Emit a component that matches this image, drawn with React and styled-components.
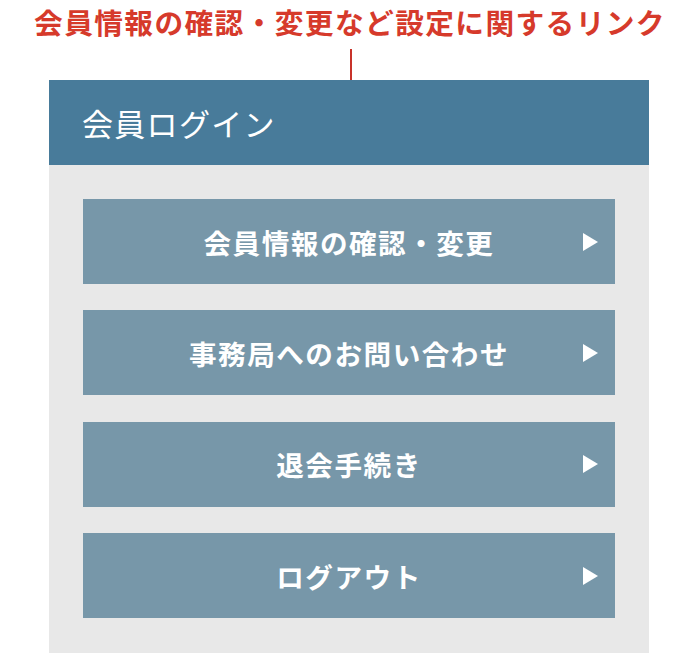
import React from "react";
import styled, { createGlobalStyle } from "styled-components";

const Global = createGlobalStyle`
  html, body { margin: 0; padding: 0; background: #ffffff; }
  body { font-family: "Noto Sans CJK JP", "Noto Sans", sans-serif; }
`;

const Page = styled.div`
  width: 700px;
  display: flex;
  flex-direction: column;
  align-items: center;
`;

const Caption = styled.div`
  margin-top: 3px;
  height: 38px;
  line-height: 38px;
  font-size: 28.7px;
  font-weight: 700;
  letter-spacing: 1.4px;
  color: #d63a2b;
  white-space: nowrap;
`;

const Connector = styled.div`
  width: 2px;
  height: 31px;
  margin-top: 8px;
  margin-left: 2px;
  background: #c8332a;
`;

const Panel = styled.section`
  width: 600px;
  margin-left: -2px;
  background: #e8e8e8;
`;

const PanelHeader = styled.h2`
  margin: 0;
  height: 85px;
  display: flex;
  align-items: center;
  padding-left: 33px;
  background: #487b9a;
  color: #ffffff;
  font-size: 31px;
  font-weight: 400;
  letter-spacing: 1.3px;
`;

const LinkList = styled.div`
  padding: 34px 34px 35px;
  display: flex;
  flex-direction: column;
  gap: 26.4px;
`;

const LinkButton = styled.a`
  position: relative;
  height: 85px;
  display: flex;
  align-items: center;
  justify-content: center;
  background: #7797a9;
  color: #ffffff;
  font-size: 27.6px;
  font-weight: 700;
  letter-spacing: 1.5px;
  text-decoration: none;
`;

const Arrow = styled.span`
  position: absolute;
  right: 17px;
  top: 50%;
  transform: translateY(-50%);
  width: 0;
  height: 0;
  border-top: 9px solid transparent;
  border-bottom: 9px solid transparent;
  border-left: 15px solid #ffffff;
`;

const links = [
  "会員情報の確認・変更",
  "事務局へのお問い合わせ",
  "退会手続き",
  "ログアウト",
];

export default function App() {
  return (
    <Page>
      <Global />
      <Caption>会員情報の確認・変更など設定に関するリンク</Caption>
      <Connector />
      <Panel>
        <PanelHeader>会員ログイン</PanelHeader>
        <LinkList>
          {links.map((l) => (
            <LinkButton key={l} href="#">
              {l}
              <Arrow />
            </LinkButton>
          ))}
        </LinkList>
      </Panel>
    </Page>
  );
}
